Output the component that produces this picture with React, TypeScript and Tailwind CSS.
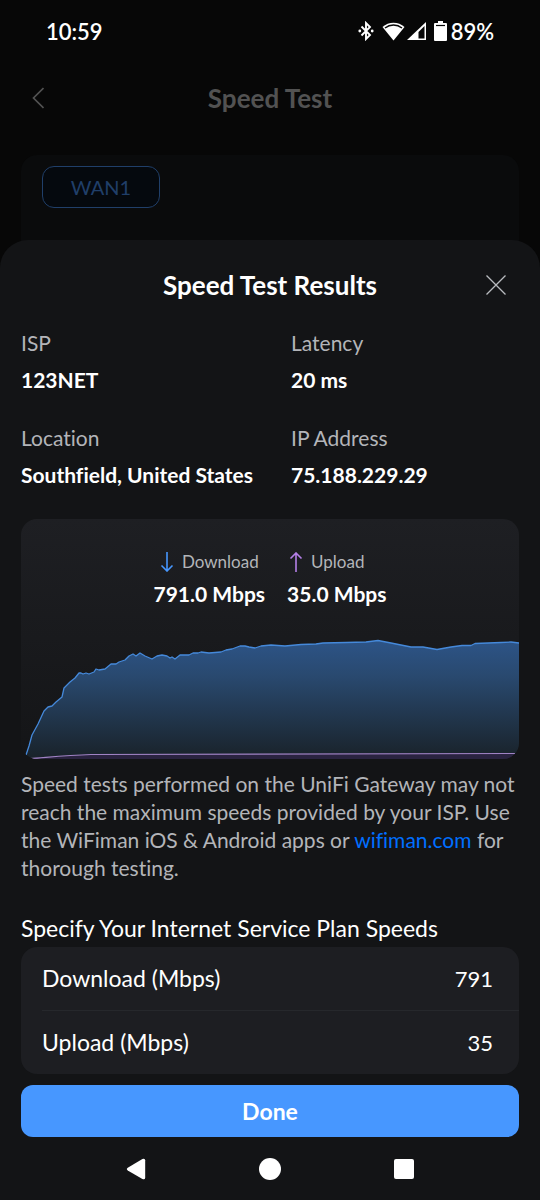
import React, { useState } from "react";

interface Detail {
  label: string;
  value: string;
}

const details: Detail[] = [
  { label: "ISP", value: "123NET" },
  { label: "Latency", value: "20 ms" },
  { label: "Location", value: "Southfield, United States" },
  { label: "IP Address", value: "75.188.229.29" },
];

const downloadLine =
  "M5 116 L8 107 L11 96 L17 85 L23 72 L27 68 L31 67 L35 63 L41 58 L43 49 L49 43 L54 39 L58 34 L60 34 L62 35 L65 34 L68 35 L73 33 L75 30 L78 31 L84 30 L90 25 L95 25 L98 23 L104 21 L108 17 L112 15 L115 17 L119 14 L124 17 L131 20 L136 17 L141 16 L146 17 L149 19 L151 18 L154 20 L159 16 L168 16 L172 14 L177 14 L180 13 L188 14 L200 13 L205 11 L211 10 L219 7 L224 7 L228 8 L234 9 L240 7 L250 6 L264 7 L280 5.500 L295 5 L302 4 L325 3.500 L345 3 L357 1.500 L370 4 L390 8 L402 8 L416 10.500 L430 8 L441 6.500 L450 6.500 L454 4.500 L480 3.500 L490 3 L498 4";

const uploadLine =
  "M9 119.500 C20 119 42 116.500 70 115.500 C140 115 300 115 494 114.500";

const StatusBar = () => (
  <div className="flex h-[62px] items-center justify-between px-[46px] text-[22px] font-semibold">
    <span>10:59</span>
    <div className="flex items-center">
      <svg width="16" height="20" viewBox="0 0 16 20" fill="none" stroke="white" strokeWidth="1.900">
        <path d="M3.500 5.500 L12 14 L8 18 V2 L12 6 L3.500 14.500" />
        <circle cx="1.800" cy="10" r="1.400" fill="white" stroke="none" />
        <circle cx="14.200" cy="10" r="1.400" fill="white" stroke="none" />
      </svg>
      <svg className="ml-2" width="23" height="20" viewBox="0 0 23 20">
        <path d="M11.500 19.500 L0.500 6 C6.500 0.200 16.500 0.200 22.500 6 Z" fill="white" />
        <path d="M3 7 C8 3 15 3 20 7" fill="none" stroke="#070707" strokeWidth="1.600" />
      </svg>
      <svg className="ml-0.5" width="19" height="20" viewBox="0 0 19 20">
        <path d="M19 1 V19 H0 Z" fill="white" />
        <path d="M11.500 11 L17.500 5 V17.500 H11.500 Z" fill="#070707" />
      </svg>
      <svg className="ml-2" width="13" height="20" viewBox="0 0 13 20">
        <path d="M4 0 H9 V2 H12 Q13 2 13 3 V19 Q13 20 12 20 H1 Q0 20 0 19 V3 Q0 2 1 2 H4 Z" fill="white" />
        <path d="M2 4.500 H11" stroke="#070707" strokeWidth="1.200" />
      </svg>
      <span className="ml-1">89%</span>
    </div>
  </div>
);

const SpeedChart = () => (
  <div className="mt-[26px] overflow-hidden rounded-2xl bg-linear-to-b from-[#1e1f23] to-[#141517]">
    <div className="flex h-30 justify-center gap-[22px] pt-[29px]">
      <div className="flex flex-col items-center">
        <div className="flex h-7 items-center gap-2 text-[17px] text-[#b3b5b9]">
          <svg width="14" height="20" viewBox="0 0 14 20" fill="none" stroke="#4797ff" strokeWidth="1.600">
            <path d="M7 0 V19 M1.500 13.500 L7 19 L12.500 13.500" />
          </svg>
          Download
        </div>
        <div className="text-[21px] leading-9 font-bold">791.0 Mbps</div>
      </div>
      <div className="flex flex-col">
        <div className="flex h-7 items-center gap-2 pl-0.5 text-[17px] text-[#b3b5b9]">
          <svg width="14" height="20" viewBox="0 0 14 20" fill="none" stroke="#b580e8" strokeWidth="1.600">
            <path d="M7 20 V1 M1.500 6.500 L7 1 L12.500 6.500" />
          </svg>
          Upload
        </div>
        <div className="text-[21px] leading-9 font-bold">35.0 Mbps</div>
      </div>
    </div>
    <svg className="block h-[120px] w-full" viewBox="0 0 498 120" preserveAspectRatio="none" fill="none">
      <defs>
        <linearGradient id="downloadFill" x1="0" y1="0" x2="0" y2="1">
          <stop offset="0" stopColor="#2d5487" />
          <stop offset="0.300" stopColor="#29496f" />
          <stop offset="1" stopColor="#192229" />
        </linearGradient>
      </defs>
      <path d={`${downloadLine} V120 H5 Z`} fill="url(#downloadFill)" />
      <path d={`${uploadLine} H498 V120 H9 Z`} fill="#2a2340" />
      <path d={downloadLine} stroke="#4589da" strokeWidth="1.300" strokeLinejoin="round" />
      <path d={uploadLine} stroke="#a083c4" strokeWidth="1.200" />
    </svg>
  </div>
);

interface SpeedFieldProps {
  id: string;
  label: string;
  value: string;
  onChange: (value: string) => void;
}

const SpeedField: React.FC<SpeedFieldProps> = ({ id, label, value, onChange }) => (
  <div className="flex h-[63px] items-center justify-between pr-[26px]">
    <label htmlFor={id} className="text-[23px]">
      {label}
    </label>
    <input
      id={id}
      className="w-24 bg-transparent text-right text-[22px] outline-none"
      inputMode="numeric"
      value={value}
      onChange={(e) => onChange(e.target.value)}
    />
  </div>
);

export default function App() {
  const [download, setDownload] = useState("791");
  const [upload, setUpload] = useState("35");

  return (
    <div className="flex min-h-screen flex-col bg-[#070707] font-['Lato',sans-serif] text-white [font-variant-ligatures:no-common-ligatures]">
      <StatusBar />

      <header className="grid h-[72px] grid-cols-[1fr_auto_1fr] items-center px-8">
        <button type="button" aria-label="Back" className="justify-self-start">
          <svg width="12" height="22" viewBox="0 0 12 22" fill="none" stroke="#525252" strokeWidth="1.700">
            <path d="M11.500 1 L1.500 11 L11.500 21" />
          </svg>
        </button>
        <h1 className="text-[26px] font-bold text-[#525252]">Speed Test</h1>
      </header>

      <div className="mx-[21px] mt-[21px] h-[109px] rounded-2xl bg-[#0a0b0c] px-[21px] pt-[11px]">
        <button
          type="button"
          className="h-[42px] w-[118px] rounded-xl border border-[#203f69] bg-[#05090e] text-xl text-[#203f69]"
        >
          WAN1
        </button>
      </div>

      <section className="relative -mt-6 flex grow flex-col rounded-t-[28px] bg-[#131416] px-[21px]">
        <div className="grid h-[90px] grid-cols-[1fr_auto_1fr] items-center pr-3">
          <h2 className="col-start-2 pl-3 text-[26px] font-bold">Speed Test Results</h2>
          <button type="button" aria-label="Close" className="justify-self-end">
            <svg width="22" height="20" viewBox="0 0 22 20" fill="none" stroke="#b9bbbf" strokeWidth="1.300">
              <path d="M1.500 0.500 L20.500 19.500 M20.500 0.500 L1.500 19.500" />
            </svg>
          </button>
        </div>

        <dl className="grid grid-cols-[270px_1fr] gap-y-[27px] text-[21px]">
          {details.map((detail) => (
            <div key={detail.label}>
              <dt className="leading-[26px] text-[#b3b5b9]">{detail.label}</dt>
              <dd className="mt-1.5 leading-9 font-bold">{detail.value}</dd>
            </div>
          ))}
        </dl>

        <SpeedChart />

        <p className="mt-[11px] text-[21px] leading-7 text-[#b3b5b9]">
          Speed tests performed on the UniFi Gateway may not reach the maximum speeds provided by
          your ISP. Use the WiFiman iOS &amp; Android apps or{" "}
          <a href="#wifiman" className="text-[#006fff]">
            wifiman.com
          </a>{" "}
          for thorough testing.
        </p>

        <h3 className="mt-8 text-[23px] leading-7">Specify Your Internet Service Plan Speeds</h3>
        <div className="mt-[5px] rounded-2xl bg-[#1d1e22] pl-[21px]">
          <SpeedField id="download" label="Download (Mbps)" value={download} onChange={setDownload} />
          <hr className="border-[#26282c]" />
          <SpeedField id="upload" label="Upload (Mbps)" value={upload} onChange={setUpload} />
        </div>

        <button type="button" className="mt-[11px] h-[52px] rounded-xl bg-[#4797ff] text-[23px] font-bold">
          Done
        </button>

        <nav className="flex h-[63px] items-center justify-around px-12">
          <button type="button" aria-label="System back">
            <svg width="20" height="22" viewBox="0 0 20 24" fill="white">
              <path d="M17 1 Q20 0 20 2.500 V21.500 Q20 24 17 23 L1 13.500 Q-1 12 1 10.500 Z" />
            </svg>
          </button>
          <button type="button" aria-label="Home">
            <svg width="22" height="22" viewBox="0 0 22 22" fill="white">
              <circle cx="11" cy="11" r="11" />
            </svg>
          </button>
          <button type="button" aria-label="Recent apps">
            <svg width="20" height="20" viewBox="0 0 20 20" fill="white">
              <rect width="20" height="20" rx="2" />
            </svg>
          </button>
        </nav>
      </section>
    </div>
  );
}
